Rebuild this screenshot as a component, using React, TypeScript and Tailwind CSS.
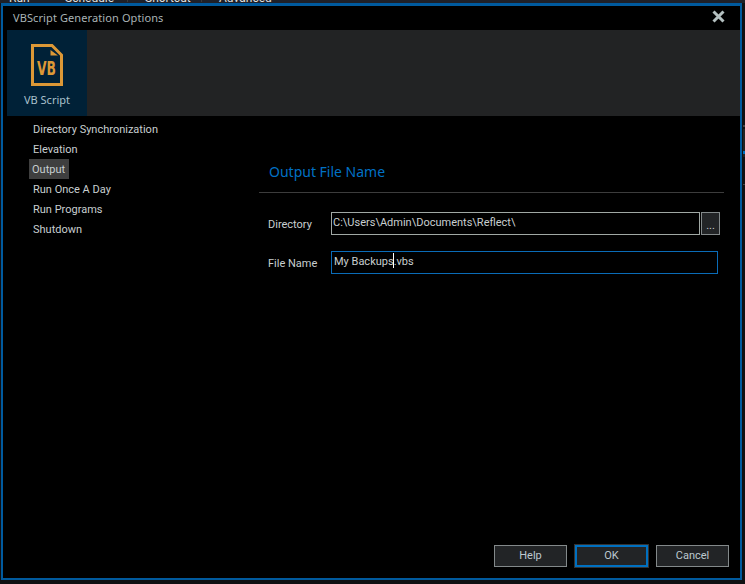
const options = ["Directory Synchronization", "Elevation", "Output", "Run Once A Day", "Run Programs", "Shutdown"]

function FileIcon() {
  return (
    <svg width="32" height="42" viewBox="0 0 32 42" className="block">
      <path d="M1.5 1.5H21L30.5 11V40.5H1.5Z" fill="none" stroke="#dc9836" strokeWidth="3" />
      <path d="M19.5 6V11.5H27Z" fill="#dc9836" />
      <text
        x="6"
        y="31"
        textLength="19"
        lengthAdjust="spacingAndGlyphs"
        fontFamily="'DejaVu Sans', sans-serif"
        fontWeight="700"
        fontSize="19"
        fill="#dc9836"
      >
        VB
      </text>
    </svg>
  )
}

function FooterButton({ label, primary }: { label: string; primary?: boolean }) {
  return (
    <button
      className={`w-[73px] h-[22px] flex items-center justify-center bg-[#222426] text-[11px] text-[#bcc8d0] ${
        primary ? "border-2 border-[#0070c0] outline outline-1 outline-[#333]" : "border border-[#83898a]"
      }`}
    >
      {label}
    </button>
  )
}

export default function App() {
  return (
    <div className="w-[745px] h-[584px] bg-[#101012] overflow-hidden font-[Roboto,sans-serif]">
      {/* strip of the window behind */}
      <div className="h-[3px] flex bg-[#1e2028] text-[12px] leading-[7px] text-[#e0e0e0]">
        <div className="pl-[9px] w-[65px] h-[2px] overflow-hidden flex items-end">Run</div>
        <div className="w-[63px] h-[2px] overflow-hidden flex items-end border-r border-[#3a3a3a]">Schedule</div>
        <div className="pl-[17px] w-[74px] h-[2px] overflow-hidden flex items-end border-r border-[#3a3a3a]">Shortcut</div>
        <div className="pl-[17px] w-[74px] h-[2px] overflow-hidden flex items-end">Advanced</div>
      </div>

      <div className="flex">
        <div className="ml-px w-[741px] h-[577px] flex flex-col border-2 border-t-[3px] border-[#005a9e] bg-black">
          <div className="h-[24px] shrink-0 flex items-center justify-between pl-[10px] pr-[15px] font-[Noto_Sans,sans-serif] text-[11px] tracking-[0.1px] text-[#a9b3b5]">
            <span>VBScript Generation Options</span>
            <svg width="13" height="13" viewBox="0 0 13 13" className="-mt-[3px]">
              <path d="M1.5 1.5L11.5 11.5M11.5 1.5L1.5 11.5" stroke="#b4c0c0" strokeWidth="3" />
            </svg>
          </div>

          <div className="h-[86px] shrink-0 ml-[4px] bg-[#222324] flex">
            <div className="w-[80px] bg-[#002137] flex flex-col items-center pt-[14px]">
              <FileIcon />
              <span className="mt-[6px] font-[Noto_Sans,sans-serif] text-[11px] leading-[16px] text-[#a9c0cc]">VB Script</span>
            </div>
          </div>

          <div className="flex-1 flex min-h-0">
            <div className="w-[256px] pl-[26px] pt-[3px] shrink-0 text-[11px] text-[#c8cfd0]">
              {options.map((name) =>
                name === "Output" ? (
                  <div key={name} className="w-[40px] h-[20px] leading-[22px] pl-[3px] bg-[#3f3f3f]">
                    {name}
                  </div>
                ) : (
                  <div key={name} className="h-[20px] leading-[22px] pl-[4px]">
                    {name}
                  </div>
                ),
              )}
            </div>

            <div className="w-[465px] pt-[44px]">
              <div className="h-[33px] pl-[10px] pb-[9px] border-b border-[#3c3c3c] font-[Noto_Sans,sans-serif] text-[14px] leading-[24px] text-[#0071c5]">
                Output File Name
              </div>
              <div className="mt-[19px] flex items-center text-[11px] text-[#c8cfd0]">
                <span className="w-[72px] pl-[9px] pt-[3px]">Directory</span>
                <div className="w-[369px] h-[23px] border border-[#a0a8a4] pl-[1px] leading-[20px]">C:\Users\Admin\Documents\Reflect\</div>
                <div className="ml-px w-[19px] h-[23px] bg-[#222426] border border-[#83898a] flex items-end justify-center leading-[17px]">...</div>
              </div>
              <div className="mt-[16px] flex items-center text-[11px] text-[#c8cfd0]">
                <span className="w-[72px] pl-[9px] pt-[3px]">File Name</span>
                <div className="w-[387px] h-[23px] border border-[#0a6cb8] pl-[2px] leading-[19px]">
                  My Backups<span className="inline-block w-px h-[15px] -ml-px align-[-3px] bg-white" />.vbs
                </div>
              </div>
            </div>
          </div>

          <div className="h-[33px] shrink-0 flex gap-[8px] pl-[491px]">
            <FooterButton label="Help" />
            <FooterButton label="OK" primary />
            <FooterButton label="Cancel" />
          </div>
        </div>

        {/* edge of the window behind, on the right */}
        <div className="ml-px w-[2px] flex flex-col">
          <div className="h-[122px]" />
          <div className="h-[2px] bg-[#444]" />
          <div className="h-[2px]" />
          <div className="h-[22px] bg-[#222]" />
          <div className="h-[3px] bg-[#0070c0]" />
          <div className="h-[3px] bg-[#222]" />
          <div className="h-[27px]" />
          <div className="h-px bg-[#444]" />
        </div>
      </div>
    </div>
  )
}
